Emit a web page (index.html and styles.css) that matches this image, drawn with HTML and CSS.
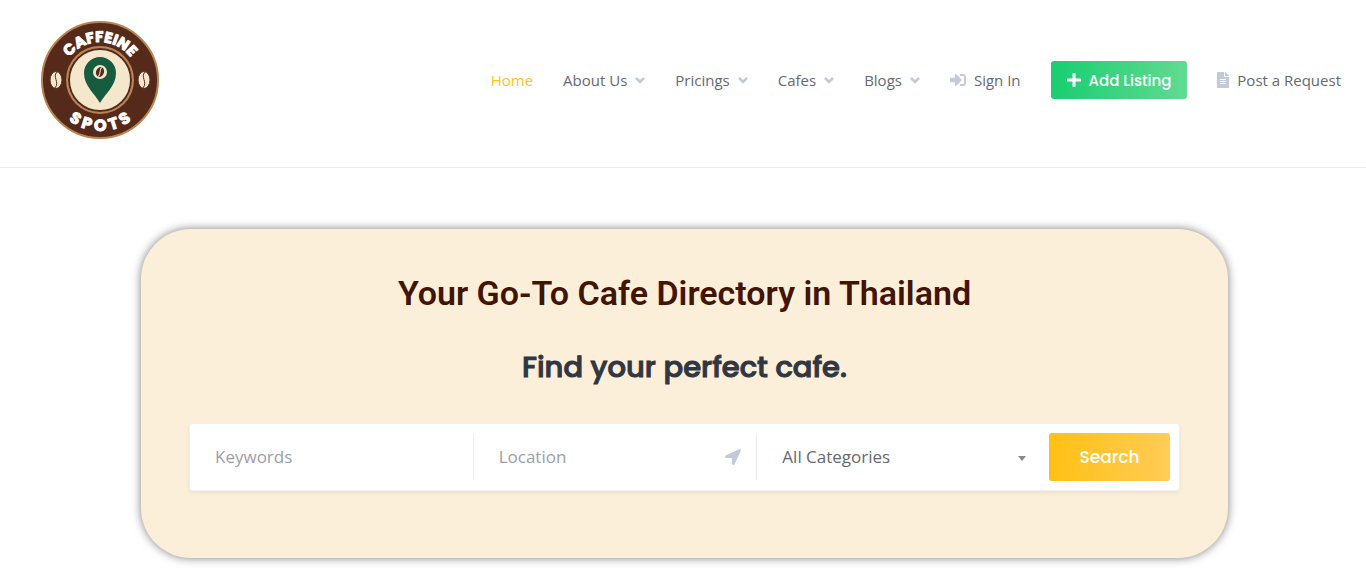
FILE: index.html
```html
<!DOCTYPE html>
<html lang="en">
<head>
  <meta charset="UTF-8" />
  <meta name="viewport" content="width=device-width, initial-scale=1.0"/>
  <title>Caffeine Spots</title>
  <link rel="stylesheet" href="styles.css">
</head>
<body>
  <header class="header">
    <a class="logo" href="#" aria-label="Caffeine Spots">
      <svg width="120" height="120" viewBox="0 0 120 120">
        <defs>
          <path id="arc-top" d="M22 60a38 38 0 0 1 76 0"/>
          <path id="arc-bottom" d="M9 60a51 51 0 0 0 102 0"/>
        </defs>
        <circle cx="60" cy="60" r="58" fill="#552a1b" stroke="#b98450" stroke-width="2"/>
        <circle cx="60" cy="60" r="33" fill="#f4e7cb" stroke="#b98450" stroke-width="2"/>
        <circle cx="60" cy="60" r="31" fill="none" stroke="#552a1b" stroke-width="2"/>
        <path d="M60 83C55 74 44 66 44 53a16 16 0 0 1 32 0c0 13-11 21-16 30z" fill="#185c40"/>
        <circle cx="60" cy="52" r="7" fill="#f4e7cb"/>
        <g transform="rotate(20 60 52)">
          <ellipse cx="60" cy="52" rx="4" ry="5" fill="#552a1b"/>
          <path d="M60 47c-2 3 2 6 0 10" fill="none" stroke="#f4e7cb"/>
        </g>
        <g fill="#f4e7cb" stroke="#552a1b">
          <ellipse cx="16" cy="60" rx="6" ry="8.500"/>
          <path d="M17 52c-5 5 3 10-2 16" fill="none"/>
          <ellipse cx="104" cy="60" rx="6" ry="8.500"/>
          <path d="M105 52c-5 5 3 10-2 16" fill="none"/>
        </g>
        <g class="logo-text">
          <text><textPath href="#arc-top" startOffset="50%">CAFFEINE</textPath></text>
          <text class="logo-text-bottom"><textPath href="#arc-bottom" startOffset="50%"><tspan dx="0 4 4 4 4">SPOTS</tspan></textPath></text>
        </g>
      </svg>
    </a>
    <nav class="nav">
      <a class="active" href="#">Home</a>
      <a href="#">About Us <svg class="chevron" width="10" height="7" viewBox="0 0 10 7"><path d="M1 1l4 4 4-4"/></svg></a>
      <a href="#">Pricings <svg class="chevron" width="10" height="7" viewBox="0 0 10 7"><path d="M1 1l4 4 4-4"/></svg></a>
      <a href="#">Cafes <svg class="chevron" width="10" height="7" viewBox="0 0 10 7"><path d="M1 1l4 4 4-4"/></svg></a>
      <a href="#">Blogs <svg class="chevron" width="10" height="7" viewBox="0 0 10 7"><path d="M1 1l4 4 4-4"/></svg></a>
      <a href="#">
        <svg class="icon" width="16" height="16" viewBox="0 0 512 512"><path d="M416 448h-84c-6.600 0-12-5.400-12-12v-40c0-6.600 5.400-12 12-12h84c17.700 0 32-14.300 32-32V160c0-17.700-14.300-32-32-32h-84c-6.600 0-12-5.400-12-12V76c0-6.600 5.400-12 12-12h84c53 0 96 43 96 96v192c0 53-43 96-96 96zm-47-209L201 71c-15-15-41-4.500-41 17v96H24c-13.300 0-24 10.700-24 24v96c0 13.300 10.700 24 24 24h136v96c0 21.500 26 32 41 17l168-168c9.300-9.400 9.300-24.600 0-34z"/></svg>
        Sign In
      </a>
      <button class="btn btn-listing" type="button">
        <svg width="14" height="14" viewBox="0 0 14 14"><path d="M7 1v12M1 7h12"/></svg>
        Add Listing
      </button>
      <a href="#">
        <svg class="icon" width="12" height="16" viewBox="0 0 384 512"><path d="M224 136V0H24C10.700 0 0 10.700 0 24v464c0 13.300 10.700 24 24 24h336c13.300 0 24-10.700 24-24V160H248c-13.200 0-24-10.800-24-24zm64 236c0 6.600-5.400 12-12 12H108c-6.600 0-12-5.400-12-12v-8c0-6.600 5.400-12 12-12h168c6.600 0 12 5.400 12 12v8zm0-64c0 6.600-5.400 12-12 12H108c-6.600 0-12-5.400-12-12v-8c0-6.600 5.400-12 12-12h168c6.600 0 12 5.400 12 12v8zm0-72v8c0 6.600-5.400 12-12 12H108c-6.600 0-12-5.400-12-12v-8c0-6.600 5.400-12 12-12h168c6.600 0 12 5.400 12 12zm96-114v6H256V0h6c6.400 0 12.500 2.500 17 7l98 98c4.500 4.500 7 10.600 7 17z"/></svg>
        Post a Request
      </a>
    </nav>
  </header>

  <main class="content">
    <section class="hero">
      <h1>Your Go-To Cafe Directory in Thailand</h1>
      <h2>Find your perfect cafe.</h2>
      <form class="search">
        <div class="field">
          <input type="text" placeholder="Keywords" aria-label="Keywords">
        </div>
        <div class="field">
          <input type="text" placeholder="Location" aria-label="Location">
          <button class="locate" type="button" aria-label="Locate me">
            <svg width="16" height="16" viewBox="0 0 16 16"><path d="M14 0.300L1.200 6.300C-0.500 7.100 0 9 1.400 9H7v5.600c0 1.500 2 1.900 2.700 0.300L15.700 2c0.500-1.200-0.500-2.200-1.700-1.700z"/></svg>
          </button>
        </div>
        <div class="field">
          <select aria-label="Category">
            <option>All Categories</option>
          </select>
          <svg class="caret" width="8" height="5" viewBox="0 0 8 5"><path d="M0 0h8L4 5z"/></svg>
        </div>
        <button class="btn btn-search" type="submit">Search</button>
      </form>
    </section>
  </main>
</body>
</html>
```
FILE: styles.css
```css
* { box-sizing: border-box; }
body {
  margin: 0;
  background: #fff;
  color: #656972;
  font-family: "Open Sans", sans-serif;
  font-size: 15px;
}
.header {
  display: flex;
  align-items: center;
  justify-content: space-between;
  padding: 20px 25px 27px 40px;
  border-bottom: 1px solid #ebebee;
}
.logo svg { display: block; }
.logo-text {
  fill: #fff;
  stroke: #fff;
  stroke-linejoin: round;
  font-family: Poppins, Lato, sans-serif;
  font-size: 15px;
  font-weight: 700;
  text-anchor: middle;
}
.logo-text-bottom { font-size: 16px; }
.nav {
  display: flex;
  align-items: center;
  gap: 30px;
}
.nav a {
  display: flex;
  align-items: center;
  gap: 8px;
  color: #656972;
  text-decoration: none;
  white-space: nowrap;
}
.nav a.active { color: #ffc224; }
.chevron {
  fill: none;
  stroke: #c4c9da;
  stroke-width: 2.5;
}
.icon { fill: #c4c9da; }

.btn {
  border: none;
  border-radius: 3px;
  color: #fff;
  font-family: Poppins, Inter, sans-serif;
  font-weight: 500;
  cursor: pointer;
}
.btn-listing {
  display: flex;
  align-items: center;
  gap: 8px;
  height: 38px;
  padding: 0 16px;
  background: linear-gradient(to right, #18ce70, #62da92);
  font-size: 15px;
}
.btn-listing svg {
  stroke: #fff;
  stroke-width: 3;
  stroke-linecap: round;
}

.content { padding: 61px 138px 16px 141px; }
.hero {
  padding: 43px 48px 67px;
  background: #fcefd9;
  border-radius: 50px;
  box-shadow: 0 0 10px rgba(0,0,0,0.5);
  text-align: center;
}
.hero h1 {
  margin: 0;
  color: #421404;
  font-family: Roboto, sans-serif;
  font-size: 34px;
  font-weight: 600;
  line-height: 42px;
}
.hero h2 {
  margin: 32px 0 34px;
  color: #303642;
  font-family: Poppins, Inter, sans-serif;
  font-size: 29px;
  font-weight: 500;
  line-height: 43px;
  -webkit-text-stroke: 1px #303642;
}
.search {
  display: flex;
  align-items: center;
  padding: 9px 9px 9px 0;
  background: #fff;
  border: 1px solid #f0f0f3;
  border-radius: 3px;
  box-shadow: 0 2px 4px rgba(0,0,0,0.06);
}
.field {
  position: relative;
  display: flex;
  flex: 1 1 0;
  min-width: 0;
  height: 46px;
  border-right: 1px solid #ebebf2;
}
.field:nth-of-type(3) { border-right: none; }
.field input,
.field select {
  flex: 1;
  min-width: 0;
  padding: 0 0 2px 25px;
  border: none;
  background: none;
  color: #656972;
  font-family: inherit;
  font-size: 17px;
  appearance: none;
}
.field input::placeholder { color: #9c9ea6; }
.locate {
  display: flex;
  align-items: center;
  padding: 0 15px;
  border: none;
  background: none;
  cursor: pointer;
}
.locate svg { fill: #c4c9da; }
.caret {
  position: absolute;
  top: 22px;
  right: 14px;
  fill: #888;
  pointer-events: none;
}
.btn-search {
  width: 121px;
  height: 48px;
  margin-left: 9px;
  background: linear-gradient(to right, #ffc014, #ffcc56);
  font-size: 17px;
}
```
